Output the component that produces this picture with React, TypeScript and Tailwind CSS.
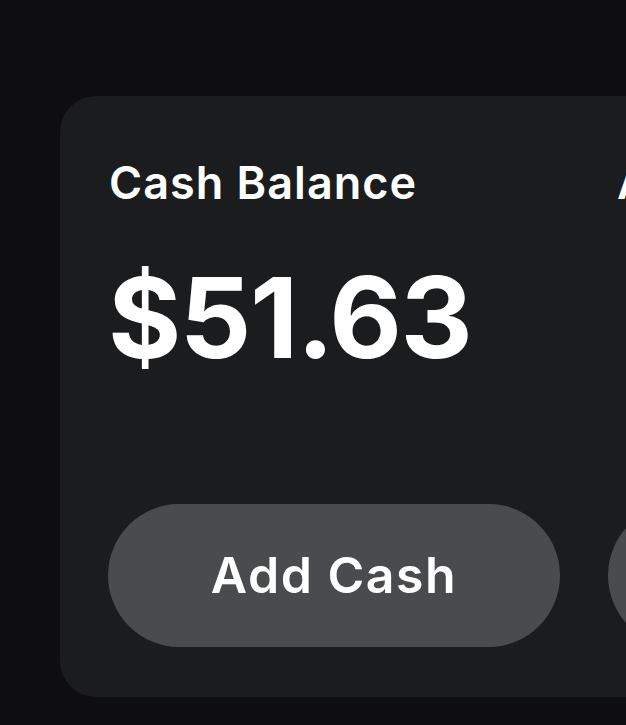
export default function App() {
  const cols = [
    { label: "Cash Balance", value: "$51.63", action: "Add Cash", indent: "pl-[1px]" },
    { label: "Account & Routing", value: "", action: "Cash Out", indent: "pl-[9px]" },
  ];
  return (
    <div className="h-[725px] w-[626px] overflow-hidden bg-[#0e0e10] pl-[60px] pt-[96px] font-['Inter',sans-serif] text-white">
      <div className="flex h-[601px] w-[1100px] gap-[48px] rounded-[36px] bg-[#1b1c1e] pl-[48px] pt-[55px]">
        {cols.map((c) => (
          <div key={c.label} className="flex w-[452px] shrink-0 flex-col">
            <p className={`${c.indent} text-[45px] font-semibold leading-[64px] tracking-[1px]`}>{c.label}</p>
            <p className="mt-[42px] h-[120px] text-[112px] font-bold leading-[120px] tracking-[-1.5px]">
              {c.value}
            </p>
            <button className="mt-[127px] flex h-[143px] w-full items-center justify-center rounded-full bg-[#4a4b4d] text-[50px] font-semibold tracking-[1.5px]">
              {c.action}
            </button>
          </div>
        ))}
      </div>
    </div>
  );
}
